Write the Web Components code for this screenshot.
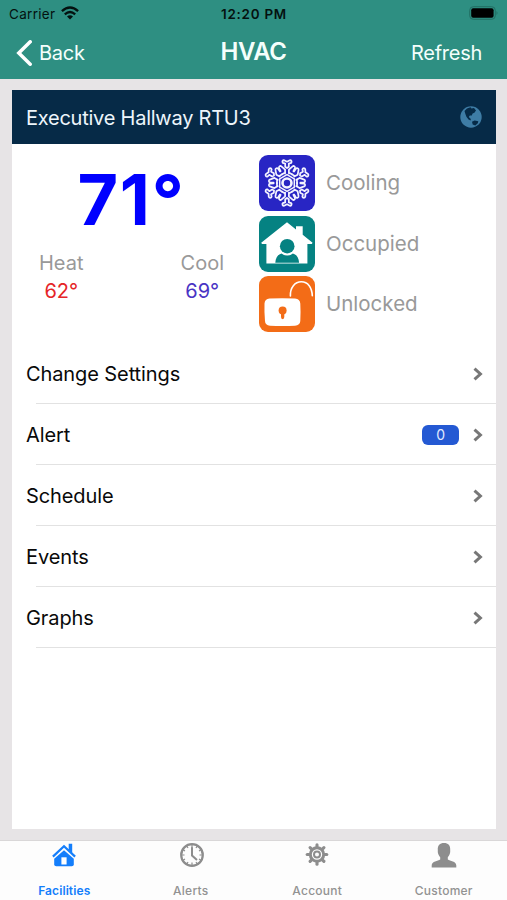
<!DOCTYPE html>
<html lang="en">
<head>
<meta charset="utf-8">
<title>HVAC</title>
<style>
html,body{margin:0;height:100%}
body{font-family:Inter,"Liberation Sans",sans-serif;background:#e7e4e6;overflow:hidden}
</style>
</head>
<body>
<hvac-app></hvac-app>
<script>
const define = (name, html, ready) => customElements.define(name, class extends HTMLElement {
  constructor() {
    super();
    const t = document.createElement('template');
    t.innerHTML = html;
    this.attachShadow({mode: 'open'}).append(t.content.cloneNode(true));
  }
  connectedCallback() { if (ready) ready(this); }
});

const branch = `<path d="M-1.9-9.5V-13.4L-5.6-16.6M1.9-9.5V-13.4L5.6-16.6M-1.8-16.2V-19.4L-4.2-20.2a1.5 1.5 0 0 1 1.4-2.5L0-21.3L2.8-22.7a1.5 1.5 0 0 1 1.4 2.5L1.8-19.4V-16.2L0-15ZM-5.6-16.6a1.5 1.5 0 0 0-2.3 1.8L-6.4-11.8M5.6-16.6a1.5 1.5 0 0 1 2.3 1.8L6.4-11.8M-5.2-8.6L-1.9-10.4M5.2-8.6L1.9-10.4"/>`;
const icons = {
  snow: `<svg viewBox="-28 -28 56 56"><g fill="none" stroke="#f4f4ff" stroke-width="1.75" stroke-linejoin="round" stroke-linecap="round">
    ${[0,60,120,180,240,300].map(a => `<g transform="rotate(${a})">${branch}</g>`).join('')}
    <path stroke-width="1.5" d="M0-8.4L7.3-4.2V4.2L0 8.4L-7.3 4.2V-4.2Z"/><circle r="4.5" stroke-width="2.6"/></g></svg>`,
  occupied: `<svg viewBox="0 0 56 56"><path fill="#fff" d="M28 6.3L37 13.4V10.2H43.7V18.8L53.6 26.8L52.8 27.9H48.4V47.4H7.4V27.9H3L2.2 26.8Z"/>
    <circle cx="28.2" cy="30.2" r="7.3" fill="#058282"/><path fill="#058282" d="M16.3 46.7C16.6 41.5 19 38.5 22.5 37.4Q28.2 41.8 33.9 37.4C37.4 38.5 39.8 41.5 40.1 46.7Z"/></svg>`,
  unlocked: `<svg viewBox="0 0 56 56"><path fill="none" stroke="#fff" stroke-width="1.6" stroke-linecap="round" d="M31.4 20C31 11.5 36 5.8 42.3 5.8C49 5.8 53 11.5 53.3 19.8"/>
    <path fill="#fff" d="M10.5 22.6Q23.3 21.8 36 22.6Q41 23 41.3 27.5Q41.8 36 41.3 45Q41 49.4 36 49.7Q23.5 50.4 11 49.7Q6.2 49.4 6 45Q5.2 36 5.5 27.5Q5.8 23 10.5 22.6Z"/>
    <circle cx="23.6" cy="34.5" r="4" fill="#f36c17"/><path fill="#f36c17" d="M22 35H25.3V40.8Q25.3 43.2 23.6 43.2Q22 43.2 22 40.8Z"/></svg>`
};

define('status-bar', `<style>
  :host{display:grid;grid-template-columns:1fr auto 1fr;align-items:center;height:27px;padding:0 8px 0 9px;box-sizing:border-box;color:#04110f;font-size:13.5px}
  .left{display:flex;align-items:center;gap:6px;letter-spacing:.3px}.left svg{margin-bottom:2px}.time{font-weight:600;font-size:13.4px;letter-spacing:.75px}
  .right{justify-self:end;margin-bottom:1px}svg{display:block}
</style>
<div class="left"><span>Carrier</span><svg width="18" height="14" viewBox="0 0 18 14"><g fill="none" stroke="#04110f" stroke-width="2.3"><path d="M.9 5.1Q9-2.2 17.1 5.1"/><path d="M3.8 8.3Q9 3.7 14.2 8.3"/></g><path fill="#04110f" d="M6 10.4Q9 7.9 12 10.4L9 13.6Z"/></svg></div>
<span class="time">12:20 PM</span>
<svg class="right" width="30" height="14" viewBox="0 0 30 14"><rect x=".7" y=".7" width="25.6" height="12.6" rx="3.6" fill="none" stroke="#226e63" stroke-width="1"/><rect x="2.2" y="2.3" width="22.4" height="9.4" rx="2" fill="#000"/><path d="M27.5 5Q29.5 7 27.5 9Z" fill="#226e63"/></svg>`);

define('nav-bar', `<style>
  :host{display:grid;grid-template-columns:1fr auto 1fr;align-items:center;height:52px;color:#f4fffc;font-size:20px;letter-spacing:-.26px}
  .back{display:flex;align-items:center;gap:7px;padding-left:16px}svg{display:block}
  .title{font-weight:600;font-size:24px;letter-spacing:-.4px;padding-bottom:3px}.action{justify-self:end;padding-right:25px}
</style>
<div class="back"><svg width="16" height="26" viewBox="0 0 16 26"><path d="M14.2 1.8L2.8 13L14.2 24.2" fill="none" stroke="#fff" stroke-width="3.5" stroke-linecap="round"/></svg><span><slot name="back"></slot></span></div>
<span class="title"><slot></slot></span><span class="action"><slot name="action"></slot></span>`);

define('card-header', `<style>
  :host{display:flex;align-items:center;justify-content:space-between;height:54px;padding:0 14px;box-sizing:border-box;background:#062a47;color:#edf5fb;font-size:20px;letter-spacing:-.24px}
  svg{display:block}span{padding-top:1px}
</style><span><slot></slot></span>
<svg width="22" height="22" viewBox="0 0 22 22"><circle cx="11" cy="11" r="10.7" fill="#3e7ca5"/><path fill="#062a47" d="M4.5 5Q6.5 1.8 10.5 1.3L11.5 2.6L14 2L16 4.4L14.4 6.8L12.6 7.6L11.8 9.6L9.8 9.4L8.8 11L10.8 13L10.6 14.4L8.5 13.6L6.4 10.8L5.4 8ZM12 15.8L14.6 14.5L18.3 15.2L17.8 17.2L15.3 19.6L12.7 18.6Z"/></svg>`);

define('set-point', `<style>
  :host{display:block;text-align:center;font-size:20px;line-height:28px;color:#999}
  .v{color:var(--value)}
</style><div><slot></slot></div><div class="v"><slot name="value"></slot></div>`);

define('status-row', `<style>
  :host{display:flex;align-items:center;gap:11px;height:56px;color:#999;font-size:20.5px}
  .tile{width:56px;height:56px;border-radius:9px;background:var(--tile);flex:none}
  .tile svg{display:block;width:56px;height:56px}
  span{padding-bottom:1px}
</style><div class="tile"></div><span><slot></slot></span>`,
  el => { el.shadowRoot.querySelector('.tile').innerHTML = icons[el.getAttribute('icon')]; });

define('unit-summary', `<style>
  :host{display:grid;grid-template-columns:247px 1fr;height:199px}
  .temp{font-weight:700;font-size:70px;line-height:70px;color:#00f;text-align:center;padding:21px 8px 0 0;letter-spacing:1.6px;height:70px}
  .points{display:flex;justify-content:space-between;padding:14px 35px 0 27px}
  .status{display:flex;flex-direction:column;gap:4.7px;padding-top:11px}
</style>
<div><div class="temp">71°</div>
<div class="points"><set-point style="--value:#e52528">Heat<span slot="value">62°</span></set-point><set-point style="--value:#4934c4">Cool<span slot="value">69°</span></set-point></div></div>
<div class="status"><status-row icon="snow" style="--tile:#2825c4">Cooling</status-row><status-row icon="occupied" style="--tile:#058282">Occupied</status-row><status-row icon="unlocked" style="--tile:#f36c17">Unlocked</status-row></div>`);

define('menu-row', `<style>
  :host{display:block;height:61px;box-sizing:border-box;color:#090909;font-size:20px;letter-spacing:-.1px}
  .row{display:flex;align-items:center;height:60px;padding:1px 13px 0 14px;box-sizing:border-box}
  .label{flex:1;padding-top:1px}.line{height:1px;margin-left:24px;background:#e2e2e2}
  ::slotted([slot=badge]){display:block;width:37px;height:20px;border-radius:6px;background:#2459d3;color:#e0eaff;font-size:14px;line-height:20px;text-align:center;margin-right:14px}
</style><div class="row"><span class="label"><slot></slot></span><slot name="badge"></slot>
<svg width="10" height="14" viewBox="0 0 10 14"><path d="M1.5 1.7L7.4 7L1.5 12.3" fill="none" stroke="#777" stroke-width="3"/></svg></div><div class="line"></div>`);

define('tab-item', `<style>
  :host{display:flex;flex-direction:column;align-items:center;flex:1;color:#929292;font-size:12px;font-weight:500;letter-spacing:.25px;padding-top:1px}
  :host([active]){color:#147efb;font-weight:600;letter-spacing:.1px}
  .icon{height:26px;display:flex;align-items:center}.label{line-height:16px;margin-top:15px}
</style><div class="icon"><slot name="icon"></slot></div><span class="label"><slot></slot></span>`);

const teeth = [0,45,90,135,180,225,270,315].map(a => `<path transform="rotate(${a})" d="M0-7.5V-9.8"/>`).join('');
define('tab-bar', `<style>:host{display:flex;height:60px;background:#fdfdfd;border-top:1px solid #d9d7d8;box-sizing:border-box;padding-left:1px}svg{display:block}</style>
<tab-item active><svg slot="icon" width="26" height="24" viewBox="0 0 26 24"><path fill="#147efb" d="M13 7.2L22.8 15.8V21.3Q22.8 23.3 20.8 23.3H5.2Q3.2 23.3 3.2 21.3V15.8Z"/><path d="M1.9 13.6L13 3.2L24.1 13.6" fill="none" stroke="#147efb" stroke-width="2.2"/><path fill="#147efb" d="M17.7.8H21.2V10L17.7 6.8Z"/><path fill="#fff" d="M10.4 14.3H15.6V21.5H10.4Z"/></svg>Facilities</tab-item>
<tab-item><svg slot="icon" style="margin-left:2px" width="26" height="26" viewBox="-13 -13 26 26"><g fill="none" stroke="#8d8d8d"><circle r="10.8" stroke-width="2.2"/><path stroke-width="2" d="M0-7.8V.5L5 5"/><path stroke-width="1.2" d="M0-10V-7M0 10V7.5M-10 0H-7.5M10 0H7.5M5-8.7L4-7M-5-8.7L-4-7M5 8.7L4 7M-5 8.7L-4 7M8.7-5L7-4M-8.7-5L-7-4M8.7 5L7 4M-8.7 5L-7 4"/></g></svg>Alerts</tab-item>
<tab-item><svg slot="icon" width="26" height="26" viewBox="-13 -12.5 26 26"><g fill="none" stroke="#8d8d8d"><circle r="6.7" stroke-width="3"/><circle r="3" stroke-width="2"/><g stroke-width="3.1" stroke-linecap="round">${teeth}</g></g></svg>Account</tab-item>
<tab-item><svg slot="icon" width="26" height="26" viewBox="0 0 26 26"><path fill="#8d8d8d" d="M13 1C17.2 1 19.5 3.5 19.2 8C19.5 11 18.5 13.5 16.8 15.3V17.5C19 19 25.3 19.2 25.3 23.5V25.5H.7V23.5C.7 19.2 7 19 9.2 17.5V15.3C7.5 13.5 6.5 11 6.8 8C6.5 3.5 8.8 1 13 1Z"/></svg>Customer</tab-item>`);

define('hvac-app', `<style>
  :host{display:flex;flex-direction:column;height:900px;width:507px;background:#e7e4e6}
  header{background:#2e8f82;height:79px;flex:none}
  main{flex:1;padding:11px 11px 11px 12px;display:flex}
  .card{flex:1;background:#fff}
</style>
<header><status-bar></status-bar><nav-bar><span slot="back">Back</span>HVAC<span slot="action">Refresh</span></nav-bar></header>
<main><div class="card"><card-header>Executive Hallway RTU3</card-header><unit-summary></unit-summary>
<menu-row>Change Settings</menu-row><menu-row>Alert<span slot="badge">0</span></menu-row><menu-row>Schedule</menu-row><menu-row>Events</menu-row><menu-row>Graphs</menu-row></div></main>
<tab-bar></tab-bar>`);
</script>
</body>
</html>
